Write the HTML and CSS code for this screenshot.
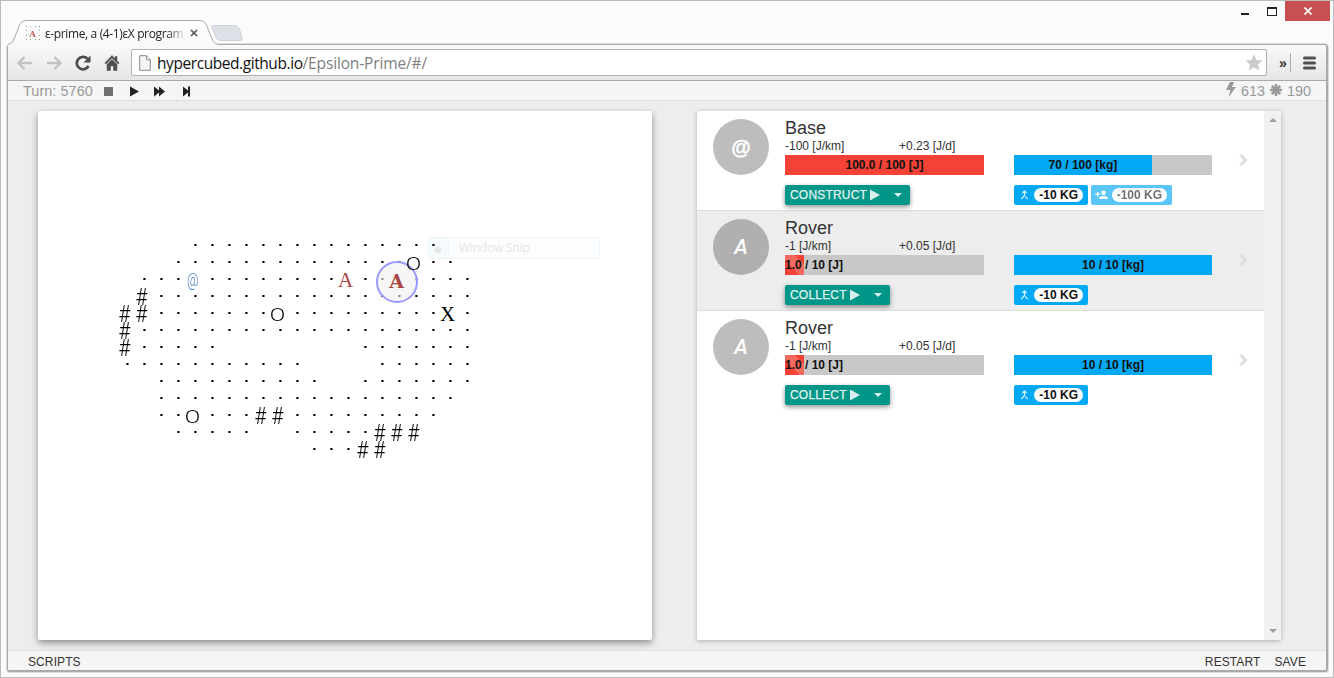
FILE: index.html
```html
<!DOCTYPE html>
<html lang="en">
<head>
<meta charset="utf-8">
<title>ε-prime, a (4-1)εX programming game</title>
<link rel="stylesheet" href="styles.css">
</head>
<body>
<div class="window">
  <header class="titlebar">
    <svg class="tab-shape" width="260" height="27" viewBox="0 0 260 27">
      <defs><linearGradient id="tabfill" x1="0" y1="0" x2="0" y2="1"><stop offset="0" stop-color="#fff"/><stop offset="1" stop-color="#f8f8f8"/></linearGradient></defs>
      <path d="M0 25 Q4 25 6 20 L12 5 Q14 1.5 18 1.5 H192 Q196 1.5 198 5 L204 20 Q206 25 211 25 V27 H0Z" fill="url(#tabfill)"/>
      <path d="M0 25.500 Q4 25 6 20 L12 5 Q14 1.5 18 1.5 H192 Q196 1.5 198 5 L204 20 Q206 25 211 25.500" fill="none" stroke="#aaa"/>
      <path d="M206 6.500 H226 Q230 6.500 231 9 L234 18 Q235 21.500 232 21.500 H213 Q209 21.500 208 18 L204 9 Q203 6.500 206 6.500Z" fill="#dce0e7" stroke="#cfd2d7"/>
    </svg>
    <div class="tab">
      <svg width="16" height="16" viewBox="0 0 16 16"><g fill="#999"><path d="M1 1h1v1H1zM5 1h1v1H5zM10 1h1v1h-1zM14 1h1v1h-1zM1 5h1v1H1zM14 5h1v1h-1zM1 10h1v1H1zM14 10h1v1h-1zM1 14h1v1H1zM5 14h1v1H5zM10 14h1v1h-1zM14 14h1v1h-1z"/></g><text x="7.500" y="11.500" text-anchor="middle" class="favicon-letter">A</text></svg>
      <span class="tab-title">ε-prime, a (4-1)εX program</span>
      <svg width="8" height="8" viewBox="0 0 8 8"><path d="M1 1l6 6M7 1L1 7" stroke="#555" stroke-width="1.700"/></svg>
    </div>
    <div class="controls">
      <svg width="8" height="31" viewBox="0 0 8 31"><path d="M0 12h8v2H0z" fill="#222"/></svg>
      <svg width="10" height="31" viewBox="0 0 10 31"><path d="M0 6h10v9H0zM1 8v6h8V8z" fill="#222" fill-rule="evenodd"/></svg>
      <div class="close"><svg width="8" height="8" viewBox="0 0 8 8"><path d="M.5.5l7 7M7.500.5l-7 7" stroke="#fff" stroke-width="1.700"/></svg></div>
    </div>
  </header>

  <div class="browser">
    <div class="navbar">
      <div class="nav-icons">
        <svg width="16" height="16" viewBox="0 0 16 16"><path d="M15 8H2M7.500 2L1.500 8l6 6" fill="none" stroke="#c2c2c2" stroke-width="2.400"/></svg>
        <svg width="16" height="16" viewBox="0 0 16 16"><path d="M1 8h13M8.500 2l6 6-6 6" fill="none" stroke="#c2c2c2" stroke-width="2.400"/></svg>
        <svg width="16" height="16" viewBox="0 0 16 16"><path d="M13.500 11A6.200 6.200 0 1 1 12.500 3.800" fill="none" stroke="#4d4d4d" stroke-width="2.700"/><path d="M15.500.5V7.500H8.500z" fill="#4d4d4d"/></svg>
        <svg width="16" height="16" viewBox="0 0 16 16"><path d="M8 .5L.8 8l1 1L8 3l6.200 6 1-1L13 5.700V1.500h-2v2.200zM8 4.500L3 9.300V15.500h3.500v-4.500h3v4.500H13V9.300z" fill="#505050" stroke="#505050" stroke-width=".5"/></svg>
      </div>
      <div class="omnibox">
        <svg width="12" height="16" viewBox="0 0 12 16"><path d="M.7.7h6.800l3.800 4v10.600H.7z" fill="#f6f6f6" stroke="#888"/><path d="M7.500.7v4h3.800" fill="#fff" stroke="#888"/></svg>
        <span class="url">hypercubed.github.io<span class="path">/Epsilon-Prime/#/</span></span>
        <svg width="18" height="17" viewBox="0 0 18 17"><path d="M9 0l2.400 5.900 6.300.5-4.800 4.100 1.500 6.200L9 13.400l-5.400 3.300 1.500-6.200L.3 6.400l6.300-.5z" fill="#ccc"/></svg>
      </div>
      <span class="more">»</span>
      <span class="nav-sep"></span>
      <svg width="13" height="14" viewBox="0 0 13 14"><path d="M1.500 2h10M1.500 7h10M1.500 12h10" stroke="#505050" stroke-width="3" stroke-linecap="round"/></svg>
    </div>

    <div class="statusbar">
      <span class="turn">Turn: 5760</span>
      <svg class="playback" width="90" height="12" viewBox="0 0 90 12">
        <path d="M1 2h9v9H1z" fill="#707070"/>
        <g fill="#222"><path d="M27 1.500l9 5-9 5zM51 1.500l5 4V1.500l6 5-6 5v-4l-5 4zM80 1.500l5 4v-4h2v10h-2v-4l-5 4z"/></g>
      </svg>
      <div class="stats">
        <svg width="10" height="15" viewBox="0 0 10 15"><path d="M4 0h4L6 5h4L2.500 15l2-7H0z" fill="#999"/></svg><span>613</span>
        <svg class="burst" width="12" height="12" viewBox="0 0 12 12"><path d="M6 0v12M0 6h12M1.800 1.800l8.400 8.400M10.200 1.800l-8.400 8.400" stroke="#999" stroke-width="2.500"/></svg><span>190</span>
      </div>
    </div>

    <main class="content">
      <section class="card map-card">
        <div class="snip"><i>●</i><span>Window Snip</span></div>
        <div class="map" id="map"></div>
      </section>
      <section class="card list-card">
        <div class="units" id="units"></div>
        <div class="scroll"><i class="up"></i><i class="down"></i></div>
      </section>
    </main>

    <footer class="footer"><span>SCRIPTS</span><span class="right">RESTART</span><span>SAVE</span></footer>
  </div>
</div>
<script src="app.js"></script>
</body>
</html>
```

FILE: styles.css
```css
*, *::before { box-sizing: border-box; }
body { margin: 0; background: #fbfbfb; font-family: "Liberation Sans", Arial, sans-serif; color: #333; }
svg { display: block; flex: none; }
.window { width: 1334px; height: 678px; border: 1px solid #bbb; background: #fbfbfb; padding: 0 5px 5px 6px; display: flex; flex-direction: column; overflow: hidden; }

.titlebar { height: 43px; flex: none; position: relative; display: flex; }
.tab-shape { position: absolute; left: 1px; top: 18px; z-index: 1; }
.tab { position: relative; z-index: 2; display: flex; align-items: center; height: 16px; margin: 24px 0 0 18px; width: 174px; }
.favicon-letter { font: bold 9px "Liberation Serif", serif; fill: #b55; }
.tab-title { font: 12px "Open Sans", "Noto Sans", sans-serif; letter-spacing: -.37px; color: #222; width: 138px; margin: 0 7px 0 4px; white-space: nowrap; overflow: hidden; -webkit-mask-image: linear-gradient(to right, #000 122px, transparent 141px); }
.controls { display: flex; margin-left: auto; gap: 18px; margin-right: -2px; }
.controls svg:nth-child(2) { margin-right: -10px; }
.close { width: 45px; height: 20px; background: #c75050; display: flex; align-items: center; justify-content: center; }

.browser { flex: 1; display: flex; flex-direction: column; border: 1px solid #aaa; border-width: 1px 2px 2px 1px; border-radius: 4px 4px 3px 3px; background: #ededed; box-shadow: 0 0 0 1px #ddd; overflow: hidden; }
.navbar { height: 36px; flex: none; display: flex; align-items: center; background: linear-gradient(#f9f9f9, #e6e6e6); border-bottom: 1px solid #aaa; padding: 0 9px 0 9px; }
.nav-icons { display: flex; gap: 13px; width: 114px; }
.omnibox { width: 1136px; height: 27px; border: 1px solid #b2b2b2; border-radius: 2px; background: #fff; display: flex; align-items: center; padding: 0 3px 0 7px; flex: none; }
.url { flex: 1; margin-left: 6px; font: 15.500px/22px "Open Sans", "Noto Sans", sans-serif; letter-spacing: -.43px; color: #111; }
.path { color: #808080; letter-spacing: -.14px; }
.more { font: bold 14px/16px "Liberation Sans", sans-serif; margin-left: 12px; width: 11px; }
.nav-sep { width: 1px; height: 19px; background: #aaa; margin-right: 12px; }

.statusbar { height: 20px; flex: none; display: flex; align-items: center; background: #f5f5f5; border-bottom: 1px solid #e0e0e0; color: #999; font-size: 14.400px; padding: 0 15px; }
.turn { width: 80px; white-space: nowrap; letter-spacing: .08px; }
.playback { margin-top: 1px; }
.stats { margin-left: auto; display: flex; align-items: center; gap: 5px; }
.stats svg { margin-top: -2px; }

.content { flex: 1; display: flex; padding: 10px 0 10px 30px; gap: 45px; min-height: 0; }
.card { background: #fff; border-radius: 2px; box-shadow: 0 2px 5px rgba(0,0,0,.26), 0 1px 8px rgba(0,0,0,.12); height: 529px; }
.map-card { width: 614px; position: relative; box-shadow: 0 3px 7px rgba(0,0,0,.4); display: flex; align-items: flex-start; }
.map { position: relative; margin: 126px 0 0 78px; display: grid; grid-template-columns: repeat(21, 17px); grid-auto-rows: 17px; font: 21px/17px "Liberation Mono", monospace; color: #000; }
.cell { position: relative; text-align: center; height: 17px; white-space: pre; }
.dot::before { content: ""; display: block; width: 3px; height: 2px; margin: 7px 0 0 10px; background: linear-gradient(to right, #555 1px, #000 1px 2px, #777 2px); }
.hash { font-family: Roboto, sans-serif; font-weight: 300; font-size: 23px; line-height: 19px; transform: scaleX(.88); }
.ring { font-family: Roboto, sans-serif; font-weight: 300; line-height: 20px; font-size: 19px; transform: scaleX(1.2); z-index: 2; }
.letter { font: 21px/18px "Liberation Serif", serif; }
.home { color: #4a80c4; font: 300 19px/17px Roboto, sans-serif; transform: scaleX(.66); }
.rover { color: #a94442; line-height: 19px; }
.active { color: #a94442; font: bold 19px/20px "DejaVu Serif", serif; z-index: 1; }
.active::before { content: ""; position: absolute; z-index: -1; width: 42px; height: 42px; left: -12px; top: -10px; border: 2px solid #9a9aff; border-radius: 50%; background: rgba(240,240,240,.6); }
.snip { position: absolute; left: 389px; top: 126px; width: 173px; height: 22px; border: 1px solid #f1f6fa; background: rgba(249,252,255,.5); color: #e6e6e6; font: 12px/20px "Open Sans", sans-serif; letter-spacing: -.2px; display: flex; }
.snip i { width: 21px; background: #f5fafd; font-style: normal; text-align: center; font-size: 15px; border-right: 1px solid #eaf4fa; }
.snip span { margin-left: 10px; }

.list-card { width: 584px; display: flex; overflow: hidden; box-shadow: 0 1px 5px rgba(0,0,0,.26); }
.units { width: 567px; }
.scroll { width: 17px; background: #f1f1f1; display: flex; flex-direction: column; justify-content: space-between; align-items: center; padding: 7px 0 7px; }
.up, .down { border: 4px solid transparent; border-top: 0; border-bottom: 4px solid #a0a0a0; }
.down { border-bottom: 0; border-top: 4px solid #a0a0a0; }
.unit { height: 100px; display: flex; padding: 8px 16px 0; border-bottom: 1px solid #ddd; }
.unit:last-child { border-bottom: 0; }
.unit.selected { background: #ededed; }
.avatar { width: 56px; height: 56px; border-radius: 50%; background: #bdbdbd; color: #fff; font: italic 500 21px/56px Roboto, sans-serif; text-align: center; margin-right: 16px; }
.selected .avatar { background: #b0b0b0; }
.avatar.base { font: bold 20px/56px "Liberation Sans", sans-serif; -webkit-text-stroke: .4px #fff; }
.energy { width: 199px; margin-right: 30px; }
.name { font-size: 18px; line-height: 18px; height: 20px; }
.rates { display: flex; font-size: 12px; line-height: 14px; height: 16px; }
.rates span:first-child { width: 114px; }
.bar { height: 20px; background: #c8c8c8; position: relative; display: flex; font: bold 12px/20px "Liberation Sans", sans-serif; color: #111; }
.fill { background: #03a9f4; text-align: center; white-space: nowrap; height: 20px; flex: none; }
.heat { background: #f44336; }
.low { background: linear-gradient(45deg, #f44336 38%, #f6695e 38% 76%, #f44336 76%); text-align: left; }
.mass { width: 198px; padding-top: 36px; }
.actions { display: flex; gap: 3px; margin-top: 10px; }
.btn { height: 20px; border-radius: 2px; background: #009688; color: #e3f3f1; font-size: 12px; line-height: 20px; display: flex; align-items: center; padding: 0 8px 0 5px; letter-spacing: .2px; box-shadow: 0 2px 5px rgba(0,0,0,.45); white-space: nowrap; -webkit-text-stroke: .25px #e3f3f1; }
.btn svg { margin-left: 3px; }
.btn svg.caret { margin-left: auto; }
.construct { width: 125px; }
.collect { width: 105px; }
.chip { height: 20px; width: 74px; border-radius: 2px; background: #03a9f4; display: flex; align-items: center; padding: 0 5px 0 6px; justify-content: space-between; }
.chip b { background: #fff; border-radius: 7px; height: 14px; font-size: 12px; line-height: 14px; padding: 0 5px; color: #111; white-space: nowrap; }
.chip.wide { width: 81px; opacity: .65; padding-left: 4px; }
.chip.wide b { font-weight: bold; color: #222; }
.chevron { margin: 35px 0 0 27px; }

.footer { height: 20px; flex: none; background: #f5f5f5; border-top: 1px solid #e0e0e0; display: flex; align-items: center; padding: 2px 20px 0 20px; font-size: 12px; gap: 14px; letter-spacing: .1px; }
.footer .right { margin-left: auto; }
```

FILE: app.js
```js
const rows = [
  '    ...............',
  '   ..............O..',
  ' ...@........A..B....',
  ' #...................',
  '##.......O.........X.',
  '#....................',
  '#.....        .......',
  '...........    ......',
  '  ..........  .......',
  '  ..................',
  '  ..O...##.........',
  '   .....  .....###',
  '           ...##'
];
const kinds = { '.': 'dot', '#': 'hash', O: 'ring', X: 'letter', '@': 'home', A: 'letter rover', B: 'letter active' };
document.getElementById('map').innerHTML = rows.map(row =>
  [...row.padEnd(21)].map(c => `<span class="cell ${kinds[c] || ''}">${c === '.' ? '' : c === 'B' ? 'A' : c}</span>`).join('')
).join('');

const units = [
  { icon: '@', name: 'Base', move: '-100 [J/km]', gain: '+0.23 [J/d]', energy: '100.0 / 100 [J]', ePct: 100, mass: '70 / 100 [kg]', mPct: 69.6, action: 'CONSTRUCT' },
  { icon: 'A', name: 'Rover', move: '-1 [J/km]', gain: '+0.05 [J/d]', energy: '1.0 / 10 [J]', ePct: 9.6, mass: '10 / 10 [kg]', mPct: 100, action: 'COLLECT', selected: true },
  { icon: 'A', name: 'Rover', move: '-1 [J/km]', gain: '+0.05 [J/d]', energy: '1.0 / 10 [J]', ePct: 9.6, mass: '10 / 10 [kg]', mPct: 100, action: 'COLLECT' }
];
document.getElementById('units').innerHTML = units.map(u => `
  <article class="unit ${u.selected ? 'selected' : ''}">
    <div class="avatar ${u.icon === '@' ? 'base' : ''}">${u.icon}</div>
    <div class="energy">
      <div class="name">${u.name}</div>
      <div class="rates"><span>${u.move}</span><span>${u.gain}</span></div>
      <div class="bar"><div class="fill heat ${u.ePct < 50 ? 'low' : ''}" style="width:${u.ePct}%">${u.energy}</div></div>
      <div class="actions"><div class="btn ${u.action.toLowerCase()}">${u.action}
        <svg width="10" height="12" viewBox="0 0 10 12"><path d="M0 .5l10 5.500-10 5.500z" fill="#d9efed"/></svg>
        <svg class="caret" width="8" height="4" viewBox="0 0 8 4"><path d="M0 0h8L4 4z" fill="#d9efed"/></svg></div></div>
    </div>
    <div class="mass">
      <div class="bar"><div class="fill" style="width:${u.mPct}%">${u.mass}</div></div>
      <div class="actions">
        <div class="chip"><svg width="9" height="10" viewBox="0 0 9 10"><path d="M4.500 1v4.500L1.200 9.200M5.200 6.500l2.600 2.700M2.300 3.200L4.500.9l2.200 2.300" fill="none" stroke="#d9f2fe" stroke-width="1.200"/></svg><b>-10 KG</b></div>
        ${u.icon === '@' ? '<div class="chip wide"><svg width="13" height="10" viewBox="0 0 13 10"><circle cx="8.500" cy="2.700" r="2.300" fill="#fff"/><path d="M4 9q0-3 4.500-3T13 9zM2 2h1.300v1.500H5v1.300H3.300v1.700H2V4.800H.3V3.500H2z" fill="#fff"/></svg><b>-100 KG</b></div>' : ''}
      </div>
    </div>
    <svg class="chevron" width="9" height="12" viewBox="0 0 9 12"><path d="M1.500 1l5 5-5 5" fill="none" stroke="#ddd" stroke-width="3"/></svg>
  </article>`).join('');
```
